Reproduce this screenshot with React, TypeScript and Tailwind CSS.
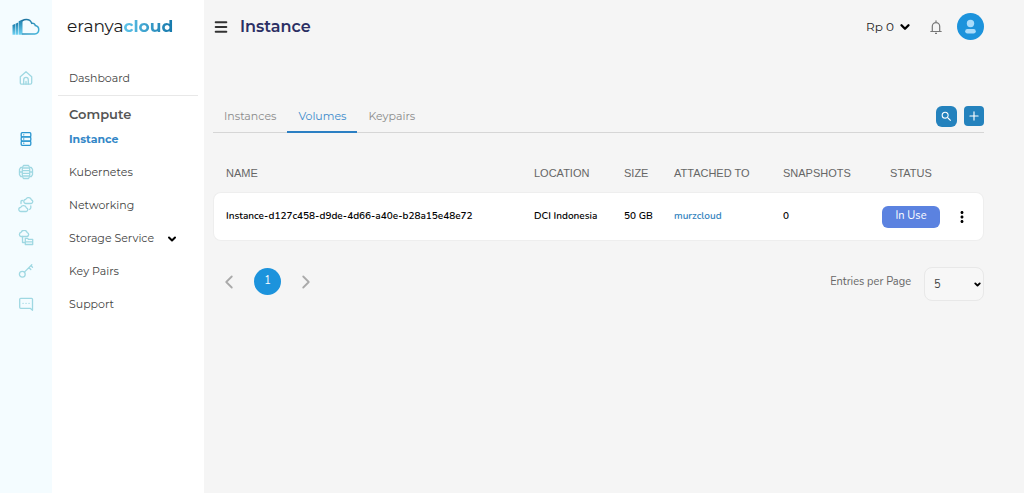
import { useState } from "react";
import type { ReactNode } from "react";
import { Menu, ChevronDown, ChevronLeft, ChevronRight, Plus } from "lucide-react";
import { MdSearch, MdMoreVert } from "react-icons/md";

type IconProps = { children: ReactNode; className?: string };

function LineIcon({ children, className = "text-[#9fd8e2]" }: IconProps) {
  return (
    <svg
      viewBox="0 0 16 16"
      className={`size-4 ${className}`}
      fill="none"
      stroke="currentColor"
      strokeWidth="1.3"
      strokeLinecap="round"
      strokeLinejoin="round"
      aria-hidden="true"
    >
      {children}
    </svg>
  );
}

function CloudLogo() {
  return (
    <svg viewBox="0 0 28 18" className="h-[18px] w-7" fill="none" aria-hidden="true">
      <defs>
        <linearGradient id="cloudStroke" x1="0" y1="0" x2="1" y2="1">
          <stop offset="0" stopColor="#1c6f9c" />
          <stop offset="1" stopColor="#46b8de" />
        </linearGradient>
        <linearGradient id="cloudBars" x1="0" y1="0" x2="0" y2="1">
          <stop offset="0" stopColor="#1b7cab" />
          <stop offset="1" stopColor="#6fd3f3" />
        </linearGradient>
      </defs>
      <path d="M.5 7 3 6V16.700H.5z" fill="url(#cloudBars)" />
      <path d="M3.500 5.800 6.200 4.500V16.700H3.500z" fill="url(#cloudBars)" />
      <path d="M6.700 3.300 10.500 1.500V16.700H6.700z" fill="url(#cloudBars)" />
      <path
        d="M10.500 16H22.800a4.300 4.300 0 0 0 .5-8.500 2.900 2.900 0 0 0-3.600-2.200C18.900 2.900 16.800 1.500 14.300 1.500c-1.500 0-2.800.400-3.800 1.200"
        stroke="url(#cloudStroke)"
        strokeWidth="1.5"
        strokeLinecap="round"
      />
    </svg>
  );
}

const railLinks = [
  {
    name: "Instance",
    active: true,
    icon: (
      <>
        <rect x="3.200" y="1.700" width="9.600" height="4.200" rx="1" />
        <rect x="3.200" y="5.900" width="9.600" height="4.200" rx="1" />
        <rect x="3.200" y="10.100" width="9.600" height="4.200" rx="1" />
        <path d="M5.700 3.800h.1M5.700 8h.1M5.700 12.200h.1" />
      </>
    ),
  },
  {
    name: "Kubernetes",
    icon: (
      <>
        <path d="M5.500 1.500h5l1 1.800h1.700l1.300 2v5.400l-1.300 2h-1.700l-1 1.800h-5l-1-1.800H2.800l-1.300-2V5.300l1.300-2h1.700z" />
        <path d="M4.300 4h7.400v8H4.300zM4.300 6.700h7.400M4.300 9.300h7.400M1.500 8h2.800M11.700 8h2.800" />
      </>
    ),
  },
  {
    name: "Networking",
    icon: (
      <>
        <path d="M8 6.500h5.200a1.900 1.900 0 0 0 .2-3.700 3 3 0 0 0-5.600-.5A2.100 2.100 0 0 0 8 6.500z" />
        <path d="M3 14.500h5.200a1.900 1.900 0 0 0 .2-3.700 3 3 0 0 0-5.600-.5A2.100 2.100 0 0 0 3 14.500z" />
        <path d="M4.500 3.500H4Q3 3.500 3 4.500v2M12.800 9v1.800q0 1.500-1.500 1.500" />
      </>
    ),
  },
  {
    name: "Storage Service",
    icon: (
      <>
        <path d="M3 6.500h6a2 2 0 0 0 .2-3.900 3.200 3.200 0 0 0-6.100-.2A2.100 2.100 0 0 0 3 6.500z" />
        <path d="M4.500 6.500V12.500H7" />
        <path d="M7.300 8.300h2.400l.7 1h4.300v2.500H7.300zM7.300 11.800h7.400v2.700H7.300z" />
      </>
    ),
  },
  {
    name: "Key Pairs",
    icon: (
      <>
        <circle cx="4.300" cy="11.200" r="2.900" />
        <path d="M6.400 9.100 13.800 1.700M11 4.700l1.800 1.800M13 2.700l1.500 1.500" />
      </>
    ),
  },
  {
    name: "Support",
    icon: (
      <>
        <path d="M2.700 2.300h10.800q1 0 1 1v11L12.200 12.300H2.700q-1 0-1-1v-8q0-1 1-1z" />
        <path d="M5 7.300h.1M8 7.300h.1M11 7.300h.1" />
      </>
    ),
  },
];

function Sidebar() {
  return (
    <>
      <aside className="w-[52px] shrink-0 bg-[#f4fcff]">
        <a href="#" aria-label="Home" className="flex h-[53px] items-center justify-center">
          <CloudLogo />
        </a>
        <nav aria-label="Shortcuts" className="pt-2">
          <a href="#" aria-label="Dashboard" className="mb-7 flex h-[33px] items-center justify-center">
            <LineIcon>
              <path d="M2.300 6.700 8 1.800l5.700 4.900v6q0 1.500-1.500 1.500H3.800q-1.500 0-1.500-1.500z" />
              <path d="M5.700 14V9.700a2.300 2.300 0 0 1 4.600 0V14M8 11.500V14" />
            </LineIcon>
          </a>
          {railLinks.map((link) => (
            <a key={link.name} href="#" aria-label={link.name} className="flex h-[33px] items-center justify-center">
              <LineIcon className={link.active ? "text-[#2a96d0]" : "text-[#9fd8e2]"}>{link.icon}</LineIcon>
            </a>
          ))}
        </nav>
      </aside>

      <aside className="w-[152px] shrink-0 bg-white text-[11px] text-[#444]">
        <div className="flex h-[53px] items-center pl-[15px] text-[17px]">
          <span className="text-[#1c1c1c]">eranya</span>
          <span className="bg-linear-to-r from-[#5cc4ea] to-[#1478ab] bg-clip-text font-bold text-transparent">cloud</span>
        </div>
        <nav aria-label="Main" className="pt-[9px]">
          <div className="mx-[6px] border-b border-[#e8e8e8]">
            <a href="#" className="flex h-[33px] items-center pl-[11px]">Dashboard</a>
          </div>
          <h2 className="mt-[11px] flex h-4 items-center pl-[17px] text-[13px] font-semibold text-[#555]">Compute</h2>
          {railLinks.map((link) => (
            <a
              key={link.name}
              href="#"
              className={`flex h-[33px] items-center pl-[17px] ${link.active ? "font-bold text-[#3487c7]" : ""}`}
            >
              {link.name}
              {link.name === "Storage Service" && <ChevronDown className="ml-3 size-3 text-black" strokeWidth={4} />}
            </a>
          ))}
        </nav>
      </aside>
    </>
  );
}

function Header() {
  return (
    <header className="flex h-[53px] items-center">
      <button type="button" aria-label="Toggle menu">
        <Menu className="size-4 text-[#333]" strokeWidth={3} />
      </button>
      <h1 className="ml-[11px] text-[16px] font-semibold text-[#2b2f64]">Instance</h1>
      <button type="button" className="ml-auto flex items-center gap-1 text-[12px] text-[#222]">
        Rp 0
        <ChevronDown className="size-[14px] text-black" strokeWidth={4} />
      </button>
      <button type="button" aria-label="Notifications" className="mr-[13px] ml-4 text-[#777]">
        <svg viewBox="0 0 16 16" className="size-4" fill="none" stroke="currentColor" strokeWidth="1.2" strokeLinejoin="round">
          <path d="M2.800 12.500h10.400M4.300 12.500V7.300a3.700 3.700 0 0 1 7.400 0v5.200M8 1.800v1.500" strokeLinecap="round" />
          <path d="M7 14.300h2" />
        </svg>
      </button>
      <button type="button" aria-label="Account" className="size-[27px] rounded-full bg-[#1c93dc]">
        <svg viewBox="0 0 27 27" fill="#a9dcfb">
          <circle cx="13.500" cy="10.500" r="3.700" />
          <rect x="8.200" y="16" width="10.600" height="4.500" rx="2.200" />
        </svg>
      </button>
    </header>
  );
}

const tabs = ["Instances", "Volumes", "Keypairs"];

const volumes = [
  {
    name: "Instance-d127c458-d9de-4d66-a40e-b28a15e48e72",
    location: "DCI Indonesia",
    size: "50 GB",
    attachedTo: "murzcloud",
    snapshots: 0,
    status: "In Use",
  },
];

function VolumesTable() {
  return (
    <table className="mt-[22px] w-full table-fixed border-separate border-spacing-0 text-left">
      <thead className="font-['Liberation_Sans',sans-serif] text-[11px] text-[#666]">
        <tr className="h-[37px] whitespace-nowrap">
          <th className="pl-[13px] font-normal">NAME</th>
          <th className="w-[90px] font-normal">LOCATION</th>
          <th className="w-[50px] font-normal">SIZE</th>
          <th className="w-[109px] font-normal">ATTACHED TO</th>
          <th className="w-[99px] font-normal">SNAPSHOTS</th>
          <th className="w-[58px] text-center font-normal">STATUS</th>
          <th className="w-[44px]" aria-label="Actions" />
        </tr>
      </thead>
      <tbody className="font-['Nunito','Noto_Sans',sans-serif] text-[10px] font-semibold text-black">
        {volumes.map((volume) => (
          <tr key={volume.name} className="h-[49px] *:border-y *:border-[#eee] *:bg-white">
            <td className="truncate rounded-l-lg border-l pl-[12px]">{volume.name}</td>
            <td>{volume.location}</td>
            <td>{volume.size}</td>
            <td>
              <a href="#" className="text-[#3182bd]">{volume.attachedTo}</a>
            </td>
            <td>{volume.snapshots}</td>
            <td>
              <span className="flex h-[22px] items-center justify-center rounded-md bg-[#5b82e0] text-[11px] font-normal text-white">
                {volume.status}
              </span>
            </td>
            <td className="rounded-r-lg border-r text-center">
              <button type="button" aria-label="More actions" className="align-middle text-black">
                <MdMoreVert className="size-[18px]" />
              </button>
            </td>
          </tr>
        ))}
      </tbody>
    </table>
  );
}

function Pagination() {
  const [perPage, setPerPage] = useState("5");

  return (
    <div className="mt-[26px] flex items-start justify-between font-['Nunito','Noto_Sans',sans-serif]">
      <nav aria-label="Pagination" className="flex h-[29px] items-center gap-[14px] pl-[5px] text-[#aaa]">
        <button type="button" aria-label="Previous page">
          <ChevronLeft className="size-[22px]" />
        </button>
        <button type="button" aria-current="page" className="size-[27px] rounded-full bg-[#1c93dc] text-[11px] text-white">
          1
        </button>
        <button type="button" aria-label="Next page">
          <ChevronRight className="size-[22px]" />
        </button>
      </nav>
      <div className="flex items-start gap-[13px] text-[11px] text-[#666]">
        <label htmlFor="perPage" className="flex h-[31px] items-center">Entries per Page</label>
        <div className="relative">
          <select
            id="perPage"
            value={perPage}
            onChange={(e) => setPerPage(e.target.value)}
            className="h-[34px] w-[60px] appearance-none rounded-lg border border-[#e8e8e8] bg-[#f7f7f7] pt-[2px] pl-[9px] text-[#444]"
          >
            <option>5</option>
            <option>10</option>
            <option>25</option>
          </select>
          <ChevronDown className="pointer-events-none absolute top-[13px] right-[2px] size-[9px] text-black" strokeWidth={5} />
        </div>
      </div>
    </div>
  );
}

export default function App() {
  const [tab, setTab] = useState("Volumes");

  return (
    <div className="flex min-h-screen bg-[#f5f5f5] font-['Montserrat','Inter',sans-serif]">
      <Sidebar />
      <main className="min-w-0 flex-1 pr-10 pl-[9px]">
        <Header />
        <div className="mt-[47px] flex items-center justify-between border-b border-[#d6d6d6]">
          <div role="tablist" className="-mb-px flex text-[11px] text-[#8a8a8a]">
            {tabs.map((name) => (
              <button
                key={name}
                type="button"
                role="tab"
                aria-selected={tab === name}
                onClick={() => setTab(name)}
                className={`h-[33px] border-b-2 px-[11px] pt-[2px] ${
                  tab === name ? "border-[#2b7fc3] text-[#3b8acb]" : "border-transparent"
                }`}
              >
                {name}
              </button>
            ))}
          </div>
          <div className="flex items-center gap-[7px] text-white">
            <button type="button" aria-label="Search" className="flex size-[21px] items-center justify-center rounded-md bg-[#2482bd]">
              <MdSearch className="size-[13px]" />
            </button>
            <button type="button" aria-label="Add volume" className="flex size-5 items-center justify-center rounded-sm bg-[#2482bd]">
              <Plus className="size-[14px]" />
            </button>
          </div>
        </div>
        <VolumesTable />
        <Pagination />
      </main>
    </div>
  );
}
